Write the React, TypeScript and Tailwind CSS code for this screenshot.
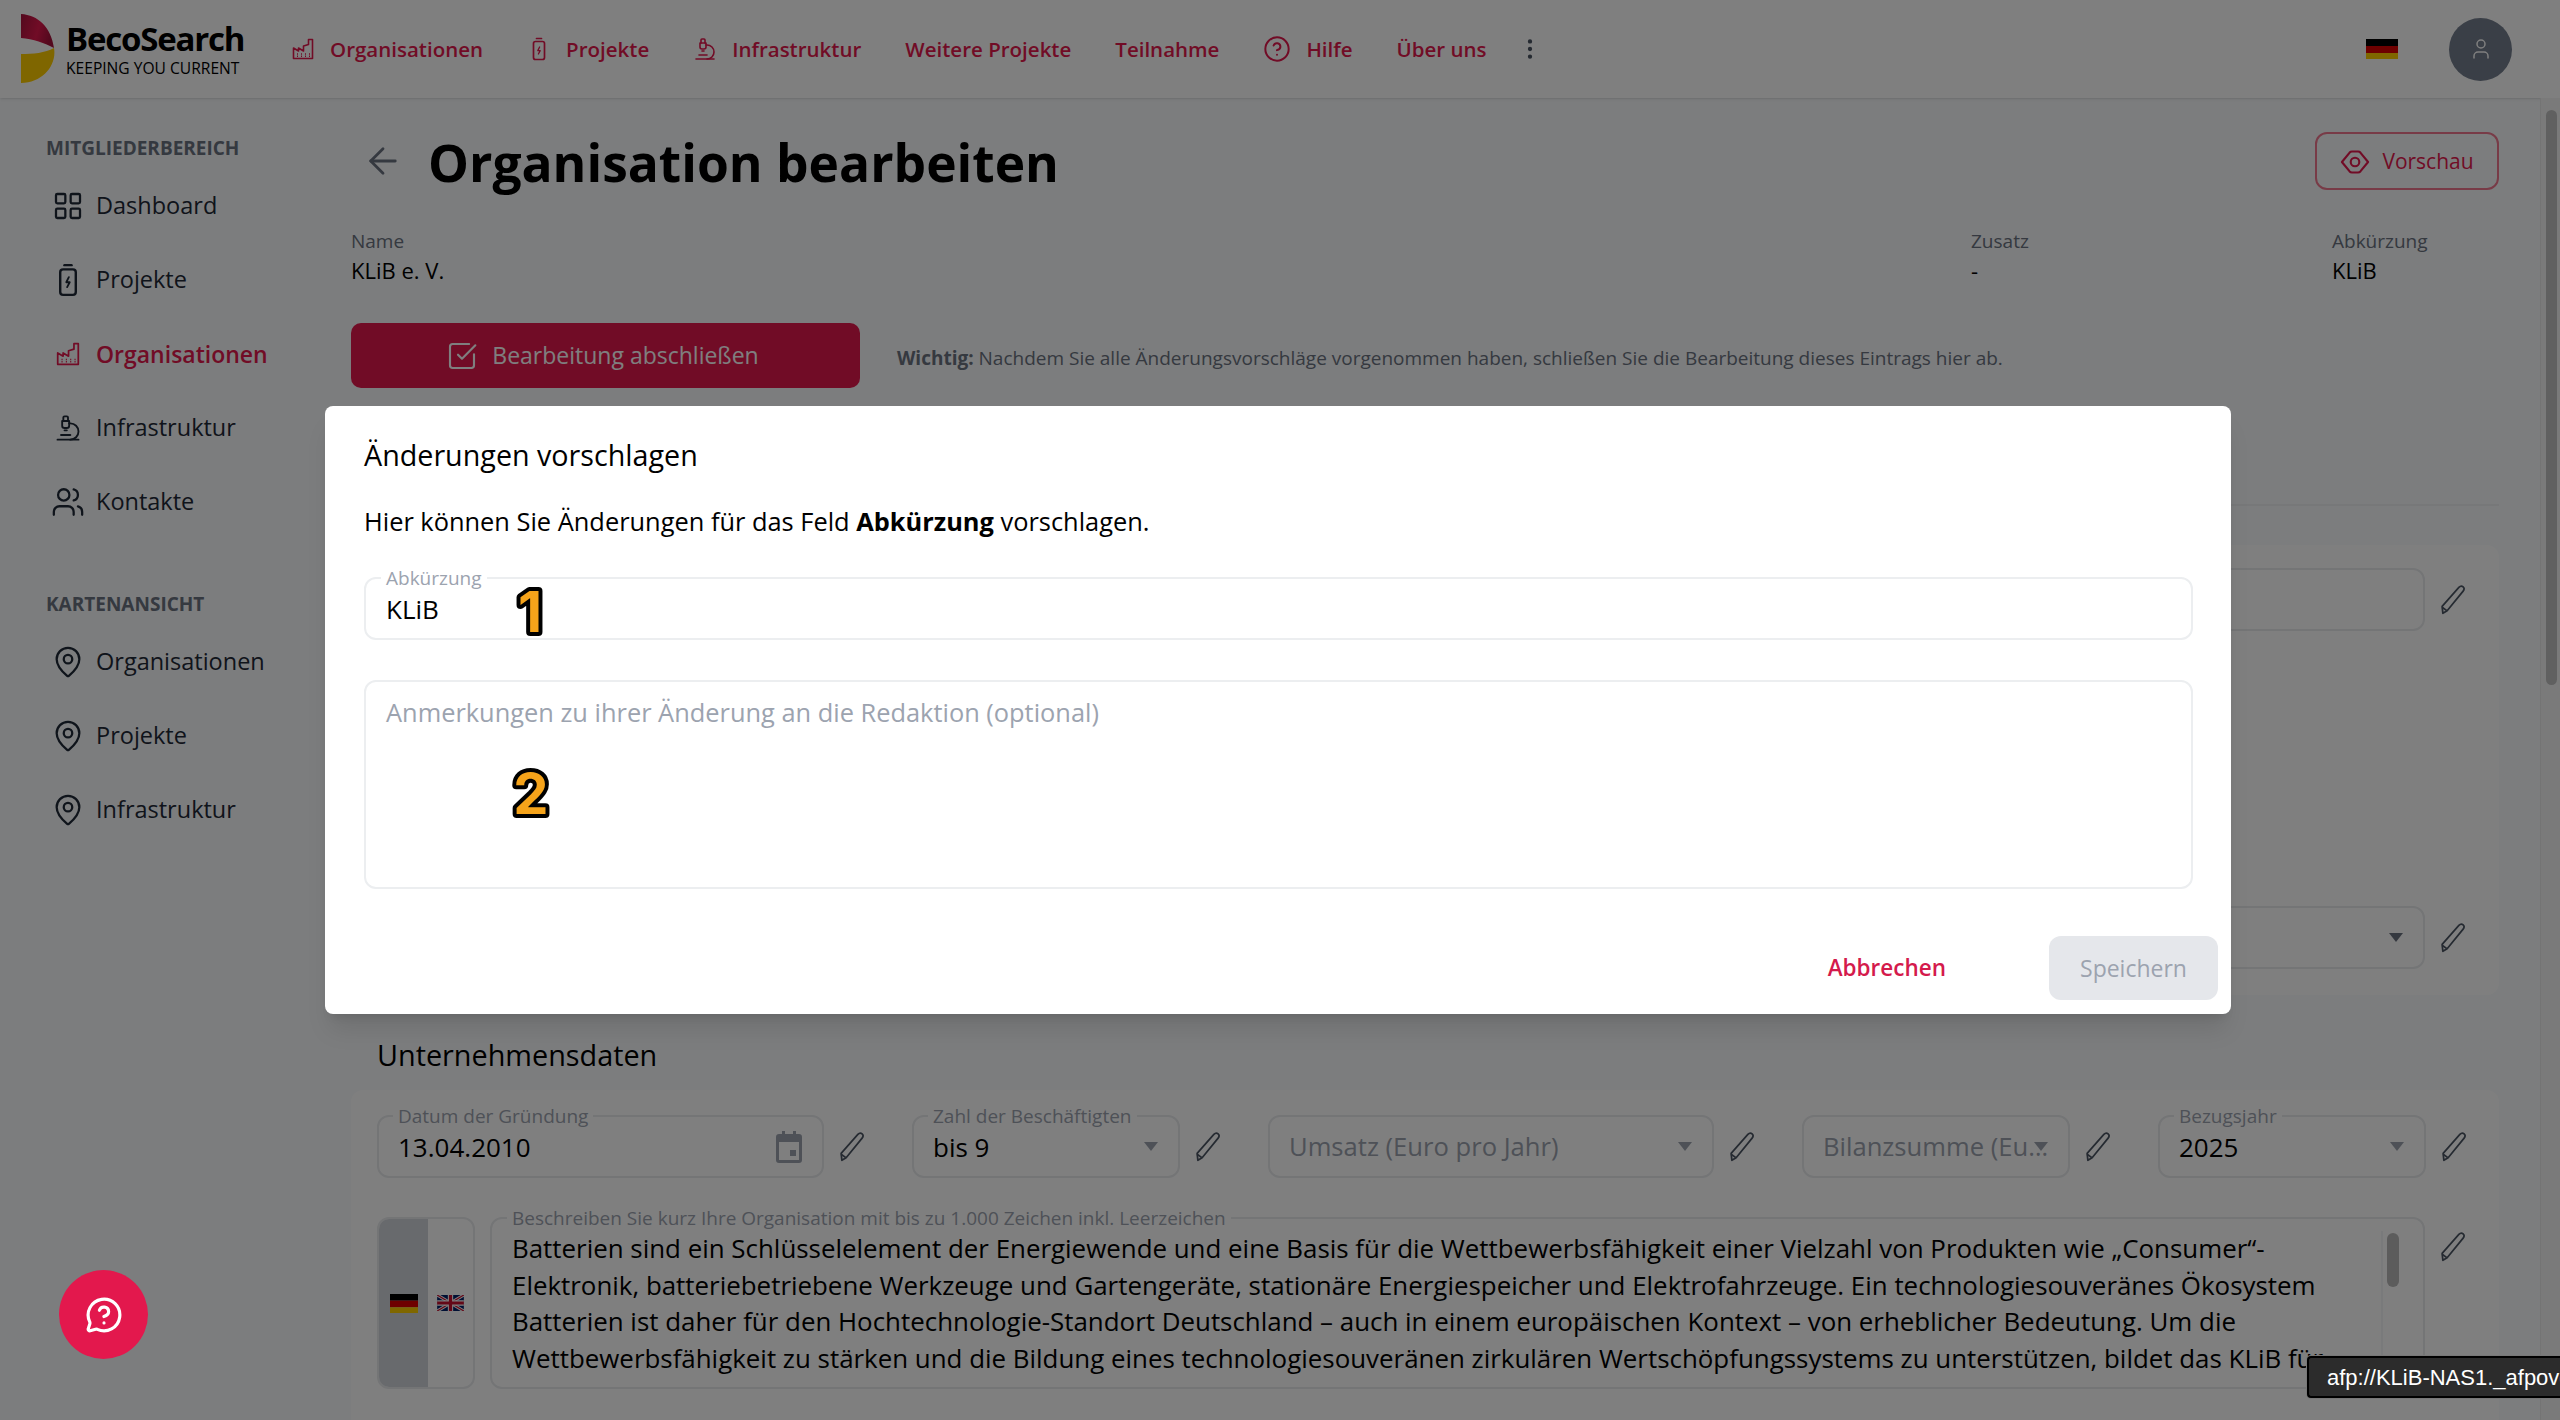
import { ArrowLeft, CircleHelp, LayoutGrid, MapPin, MessageCircleQuestion, Microscope, MoreVertical, SquareCheckBig, User, Users } from "lucide-react";
import type { ReactNode } from "react";

const descriptionLines = [
  "Batterien sind ein Schlüsselelement der Energiewende und eine Basis für die Wettbewerbsfähigkeit einer Vielzahl von Produkten wie „Consumer“-",
  "Elektronik, batteriebetriebene Werkzeuge und Gartengeräte, stationäre Energiespeicher und Elektrofahrzeuge. Ein technologiesouveränes Ökosystem",
  "Batterien ist daher für den Hochtechnologie-Standort Deutschland – auch in einem europäischen Kontext – von erheblicher Bedeutung. Um die",
  "Wettbewerbsfähigkeit zu stärken und die Bildung eines technologiesouveränen zirkulären Wertschöpfungssystems zu unterstützen, bildet das KLiB für",
];

function FactoryIcon({ className }: { className?: string }) {
  return (
    <svg viewBox="0 0 24 24" fill="none" stroke="currentColor" strokeWidth="1.6" strokeLinejoin="round" className={className}>
      <path d="M2.5 21.5V11l5 3V11l5 3V9l5-1.5V2.5h4v19z" />
      <path d="M6 17h1M10 17h1M14 17h1M18 17h1M6 19.2h1M10 19.2h1M14 19.2h1M18 19.2h1" strokeWidth="1.4" />
    </svg>
  );
}

function BatteryIcon({ className }: { className?: string }) {
  return (
    <svg viewBox="0 0 24 24" fill="none" stroke="currentColor" strokeWidth="1.7" strokeLinejoin="round" strokeLinecap="round" className={className}>
      <path d="M9.5 1.5h5" />
      <rect x="6.5" y="4.5" width="11" height="18" rx="2" />
      <path d="M12.6 10 10.8 13.6h2.4L11.4 17" strokeWidth="1.3" />
    </svg>
  );
}

function PencilIcon() {
  return (
    <svg viewBox="0 0 26 30" fill="none" stroke="currentColor" strokeWidth="1.6" strokeLinejoin="round" className="w-[28px] h-[32px] text-[#4b5563]">
      <path d="M3.5 27.5 2.8 21 18.5 3.2c1.2-1.3 3-1.4 4-.5s1.1 2.6 0 4L7.5 25z" />
      <path d="M2.8 21.8 7.2 25" />
    </svg>
  );
}

function EyeIcon() {
  return (
    <svg viewBox="0 0 28 24" fill="none" stroke="currentColor" strokeWidth="2" strokeLinejoin="round" className="w-[30px] h-[26px]">
      <path d="M1.8 12 9 3.2c.6-.7 1.3-1 2.2-1h5.6c.9 0 1.6.3 2.2 1L26.2 12 19 20.8c-.6.7-1.3 1-2.2 1h-5.6c-.9 0-1.6-.3-2.2-1z" />
      <circle cx="14" cy="12" r="4" />
    </svg>
  );
}

function CalendarIcon() {
  return (
    <svg viewBox="0 0 26 32" className="w-[26px] h-[32px] text-[#9ca3af]" fill="currentColor">
      <path d="M6 0h3v3h8V0h3v3h3a3 3 0 0 1 3 3v23a3 3 0 0 1-3 3H3a3 3 0 0 1-3-3V6a3 3 0 0 1 3-3h3zM3 11v18h20V11z" />
      <rect x="14" y="19" width="6" height="6" />
    </svg>
  );
}

function GermanFlag({ className }: { className?: string }) {
  return (
    <svg viewBox="0 0 32 20" preserveAspectRatio="none" className={className}>
      <rect width="32" height="7" fill="#000000" />
      <rect y="7" width="32" height="7" fill="#dd0000" />
      <rect y="14" width="32" height="6" fill="#ffce00" />
    </svg>
  );
}

function UkFlag({ className }: { className?: string }) {
  return (
    <svg viewBox="0 0 30 18" className={className}>
      <rect width="30" height="18" fill="#012169" />
      <path d="M0 0l30 18M30 0 0 18" stroke="#ffffff" strokeWidth="3.6" />
      <path d="M0 0l30 18M30 0 0 18" stroke="#c8102e" strokeWidth="1.4" />
      <path d="M15 0v18M0 9h30" stroke="#ffffff" strokeWidth="6" />
      <path d="M15 0v18M0 9h30" stroke="#c8102e" strokeWidth="3.6" />
    </svg>
  );
}

function Logo() {
  return (
    <svg viewBox="0 0 36 72" className="w-[36px] h-[72px]">
      <defs>
        <linearGradient id="logoTop" x1="0" y1="0" x2="1" y2="0.3">
          <stop offset="0" stopColor="#a8123c" />
          <stop offset="0.6" stopColor="#e3184d" />
          <stop offset="1" stopColor="#a8123c" />
        </linearGradient>
      </defs>
      <path d="M1 1c17 1 30 13 33 34C25 30 13 26 1 25z" fill="url(#logoTop)" />
      <path d="M1 41c12 0 24-1 33-6 3 17-11 35-33 35z" fill="#ffcc00" />
    </svg>
  );
}

function TopLink({ icon, children }: { icon?: ReactNode; children: ReactNode }) {
  return (
    <a className="flex items-center gap-[15px] text-[20.5px] font-semibold text-[#e3184d]">
      {icon}
      <span>{children}</span>
    </a>
  );
}

function SideItem({ icon, label, active }: { icon: ReactNode; label: string; active?: boolean }) {
  return (
    <a className={`flex h-[74px] items-center gap-[11px] pl-[5px] ${active ? "text-[23px] font-semibold text-[#e3184d]" : "text-[23.5px] font-medium text-[#1f2937]"}`}>
      <span className="flex w-[34px] justify-center">{icon}</span>
      {label}
    </a>
  );
}

function SideHeading({ children }: { children: ReactNode }) {
  return <h3 className="text-[19px] font-bold uppercase text-[#6b7280] leading-[26px]">{children}</h3>;
}

function Arrow({ dark }: { dark?: boolean }) {
  return <span className={`absolute right-[20px] top-[25px] border-x-[7px] border-t-[9px] border-x-transparent ${dark ? "border-t-[#6b7280]" : "border-t-[#9ca3af]"}`} />;
}

function Field({ label, value, placeholder, arrow, arrowDark, calendar, width }: { label?: string; value?: string; placeholder?: string; arrow?: boolean; arrowDark?: boolean; calendar?: boolean; width: string }) {
  return (
    <div className="flex items-center">
      <div className={`relative flex h-[63px] items-center rounded-[12px] border-2 border-[#e8eaed] pl-[19px] pr-[14px] ${width}`}>
        {label && <span className="absolute -top-[13px] left-[14px] bg-white px-[5px] text-[19px] leading-[24px] text-[#9ca3af] whitespace-nowrap">{label}</span>}
        {value && <span className="text-[26px] text-black pt-[2px]">{value}</span>}
        {placeholder && <span className="truncate text-[25.6px] text-[#9ca3af] pt-[2px]">{placeholder}</span>}
        {arrow && <Arrow dark={arrowDark} />}
        {calendar && <span className="absolute right-[20px] top-[14px]"><CalendarIcon /></span>}
      </div>
      <span className="flex w-[56px] justify-center"><PencilIcon /></span>
    </div>
  );
}

function Numeral({ n, className }: { n: string; className: string }) {
  return (
    <svg viewBox="0 0 48 64" className={`absolute w-[48px] h-[64px] overflow-visible ${className}`}>
      <text x="24" y="52" textAnchor="middle" fontSize="56" fontWeight="700" fontFamily="Inter, sans-serif" fill="#f5a31a" stroke="#000000" strokeWidth="8" strokeLinejoin="round" paintOrder="stroke">
        {n}
      </text>
    </svg>
  );
}

export default function App() {
  return (
    <div className="relative h-[1420px] w-[2560px] overflow-hidden bg-[#f8fafc] font-['Open_Sans',sans-serif]">
      {/* top bar */}
      <header className="flex h-[98px] items-center bg-white pl-[20px] pr-[48px] shadow-sm">
        <Logo />
        <div className="ml-[10px] mr-[47px] flex w-[178px] flex-col">
          <span className="text-[33px] font-bold leading-[38px] tracking-[-1.2px] whitespace-nowrap text-black">BecoSearch</span>
          <span className="text-[15.6px] leading-[20px] whitespace-nowrap text-black">KEEPING YOU CURRENT</span>
        </div>
        <nav className="flex items-center gap-[44px]">
          <TopLink icon={<FactoryIcon className="h-[24px] w-[24px]" />}>Organisationen</TopLink>
          <TopLink icon={<BatteryIcon className="h-[30px] w-[24px]" />}>Projekte</TopLink>
          <TopLink icon={<Microscope className="h-[26px] w-[24px]" strokeWidth={1.6} />}>Infrastruktur</TopLink>
          <TopLink>Weitere Projekte</TopLink>
          <TopLink>Teilnahme</TopLink>
          <TopLink icon={<CircleHelp className="h-[28px] w-[28px]" strokeWidth={1.7} />}>Hilfe</TopLink>
          <TopLink>Über uns</TopLink>
          <MoreVertical className="-ml-[14px] h-[26px] w-[26px] text-[#4b5563]" />
        </nav>
        <div className="ml-auto flex items-center gap-[51px]">
          <GermanFlag className="h-[20px] w-[32px]" />
          <div className="flex h-[63px] w-[63px] items-center justify-center rounded-full bg-[#747e8e]">
            <User className="h-[24px] w-[24px] text-white" strokeWidth={1.5} />
          </div>
        </div>
      </header>

      <div className="flex h-[1322px]">
        {/* sidebar */}
        <aside className="w-[351px] shrink-0 pl-[46px] pt-[37px]">
          <SideHeading>MITGLIEDERBEREICH</SideHeading>
          <nav className="mt-[8px]">
            <SideItem icon={<LayoutGrid className="h-[32px] w-[32px]" strokeWidth={1.7} />} label="Dashboard" />
            <SideItem icon={<BatteryIcon className="h-[36px] w-[34px]" />} label="Projekte" />
            <SideItem active icon={<FactoryIcon className="h-[26px] w-[26px]" />} label="Organisationen" />
            <SideItem icon={<Microscope className="h-[28px] w-[28px]" strokeWidth={1.6} />} label="Infrastruktur" />
            <SideItem icon={<Users className="h-[34px] w-[34px]" strokeWidth={1.6} />} label="Kontakte" />
          </nav>
          <div className="mt-[52px]">
            <SideHeading>KARTENANSICHT</SideHeading>
          </div>
          <nav className="mt-[8px]">
            <SideItem icon={<MapPin className="h-[36px] w-[36px]" strokeWidth={1.6} />} label="Organisationen" />
            <SideItem icon={<MapPin className="h-[36px] w-[36px]" strokeWidth={1.6} />} label="Projekte" />
            <SideItem icon={<MapPin className="h-[36px] w-[36px]" strokeWidth={1.6} />} label="Infrastruktur" />
          </nav>
        </aside>

        {/* content */}
        <main className="min-w-0 flex-1 pr-[41px] pt-[34px]">
          <div className="flex h-[58px] items-center">
            <ArrowLeft className="ml-[11px] h-[42px] w-[42px] text-[#6b7280]" strokeWidth={1.6} />
            <h1 className="ml-[24px] pt-[3px] text-[51.5px] font-bold leading-none text-black">Organisation bearbeiten</h1>
            <button className="ml-auto flex h-[58px] w-[184px] items-center justify-center gap-[12px] rounded-[12px] border-2 border-[#f0768f] pt-[1px] text-[21px] font-medium text-[#e3184d]">
              <EyeIcon />
              Vorschau
            </button>
          </div>

          <div className="mt-[38px] flex text-[19px]">
            <div className="flex-1">
              <div className="leading-[26px] text-[#6b7280]">Name</div>
              <div className="mt-[1px] text-[22px] leading-[30px] text-black">KLiB e. V.</div>
            </div>
            <div className="w-[361px]">
              <div className="leading-[26px] text-[#6b7280]">Zusatz</div>
              <div className="mt-[1px] text-[22px] leading-[30px] text-black">-</div>
            </div>
            <div className="w-[167px]">
              <div className="leading-[26px] text-[#6b7280]">Abkürzung</div>
              <div className="mt-[1px] text-[22px] leading-[30px] text-black">KLiB</div>
            </div>
          </div>

          <div className="mt-[38px] flex items-center">
            <button className="flex h-[65px] w-[509px] items-center justify-center gap-[14px] rounded-[10px] bg-[#e3184d] pr-[6px] text-[23px] font-medium text-white">
              <SquareCheckBig className="h-[32px] w-[32px]" strokeWidth={1.6} />
              Bearbeitung abschließen
            </button>
            <p className="ml-[37px] pt-[6px] text-[19px] text-[#6b7280]">
              <b className="font-bold">Wichtig:</b> Nachdem Sie alle Änderungsvorschläge vorgenommen haben, schließen Sie die Bearbeitung dieses Eintrags hier ab.
            </p>
          </div>

          <div className="mt-[116px] border-b-2 border-[#eef0f2]" />

          <section className="mt-[39px] flex h-[450px] flex-col justify-between rounded-[12px] bg-white pb-[26px] pl-[27px] pr-[18px] pt-[23px]">
            <div className="flex justify-end">
              <Field width="w-[1000px]" />
            </div>
            <div className="flex justify-end">
              <Field width="w-[1000px]" arrow arrowDark />
            </div>
          </section>

          <h2 className="mt-[40px] pl-[26px] text-[28.8px] font-medium leading-[40px] text-black">Unternehmensdaten</h2>

          <section className="mt-[15px] h-[400px] rounded-[12px] bg-white pl-[26px] pt-[25px]">
            <div className="flex gap-[32px]">
              <Field width="w-[447px]" label="Datum der Gründung" value="13.04.2010" calendar />
              <Field width="w-[268px]" label="Zahl der Beschäftigten" value="bis 9" arrow />
              <Field width="w-[446px]" placeholder="Umsatz (Euro pro Jahr)" arrow />
              <Field width="w-[268px]" placeholder="Bilanzsumme (Euro pro Jahr)" arrow />
              <Field width="w-[268px]" label="Bezugsjahr" value="2025" arrow />
            </div>
            <div className="mt-[39px] flex">
              <div className="flex h-[172px] w-[98px] overflow-hidden rounded-[12px] border-2 border-[#e8eaed]">
                <div className="flex w-[49px] items-center justify-center bg-[#d1d5db]">
                  <GermanFlag className="h-[19px] w-[28px]" />
                </div>
                <div className="flex flex-1 items-center justify-center">
                  <UkFlag className="h-[16px] w-[29px]" />
                </div>
              </div>
              <div className="relative ml-[15px] h-[172px] w-[1935px] rounded-[12px] border-2 border-[#e8eaed] pl-[20px] pt-[11px]">
                <div className="overflow-hidden pr-[40px]">
                  {descriptionLines.map((line) => (
                    <div key={line} className="whitespace-nowrap text-[25.9px] leading-[36.6px] text-black">
                      {line}
                    </div>
                  ))}
                </div>
                <span className="absolute -top-[13px] left-[15px] bg-white px-[5px] text-[19px] leading-[24px] text-[#9ca3af] whitespace-nowrap">
                  Beschreiben Sie kurz Ihre Organisation mit bis zu 1.000 Zeichen inkl. Leerzeichen
                </span>
                <div className="absolute bottom-0 right-[24px] top-[12px] w-[18px] border-l-2 border-[#f3f4f6] bg-white">
                  <div className="ml-[4px] mt-[2px] h-[54px] w-[12px] rounded-full bg-[#b8b8b8]" />
                </div>
              </div>
              <span className="flex h-[60px] w-[56px] justify-center pt-[14px]"><PencilIcon /></span>
            </div>
          </section>
        </main>

        {/* page scrollbar */}
        <div className="w-[20px] shrink-0 border-l border-[#e8e8e8] bg-[#f5f5f5] pl-[5px] pt-[12px]">
          <div className="h-[575px] w-[11px] rounded-full bg-[#c1c1c1]" />
        </div>
      </div>

      {/* dialog backdrop */}
      <div className="absolute inset-0 flex items-center justify-center bg-black/50 pr-[4px]">
        <div className="relative flex h-[608px] w-[1906px] flex-col rounded-[8px] bg-white pl-[39px] pr-[13px] shadow-xl">
          <h2 className="mt-[29px] text-[28.7px] font-medium leading-[40px] text-black">Änderungen vorschlagen</h2>
          <p className="mt-[28px] text-[25.4px] leading-[36px] text-black">
            Hier können Sie Änderungen für das Feld <b className="font-bold">Abkürzung</b> vorschlagen.
          </p>
          <div className="relative mt-[38px] flex h-[63px] w-[1829px] items-center rounded-[12px] border-2 border-[#eceef0] px-[20px]">
            <span className="absolute -top-[13px] left-[15px] bg-white px-[5px] text-[19px] leading-[24px] text-[#9ca3af]">Abkürzung</span>
            <span className="pt-[2px] text-[26px] text-black">KLiB</span>
          </div>
          <div className="mt-[40px] h-[209px] w-[1829px] rounded-[12px] border-2 border-[#eceef0] px-[20px] pt-[12px] text-[25.4px] leading-[36px] text-[#9ca3af]">
            Anmerkungen zu ihrer Änderung an die Redaktion (optional)
          </div>
          <Numeral n="1" className="left-[181px] top-[174px]" />
          <Numeral n="2" className="left-[182px] top-[356px]" />
          <div className="mt-[47px] flex items-center justify-end">
            <button className="mr-[103px] text-[22.5px] font-semibold text-[#d41a4c]">Abbrechen</button>
            <button className="h-[64px] w-[169px] rounded-[12px] bg-[#e5e7eb] text-[23px] font-medium text-[#9ca3af]">Speichern</button>
          </div>
        </div>
      </div>

      {/* help button sits above the backdrop */}
      <button className="absolute bottom-[61px] left-[59px] flex h-[89px] w-[89px] items-center justify-center rounded-full bg-[#e3184d] text-white">
        <MessageCircleQuestion className="h-[38px] w-[38px]" strokeWidth={2} />
      </button>

      {/* browser status tooltip */}
      <div className="absolute bottom-[22px] left-[2307px] right-0 flex h-[42px] items-center overflow-hidden whitespace-nowrap rounded-l-[4px] border-2 border-r-0 border-black bg-[#2c2c2c] pl-[18px] font-['Liberation_Sans',sans-serif] text-[22px] text-white ring-1 ring-[#777777]">
        afp://KLiB-NAS1._afpovertcp._tcp.local
      </div>
    </div>
  );
}
